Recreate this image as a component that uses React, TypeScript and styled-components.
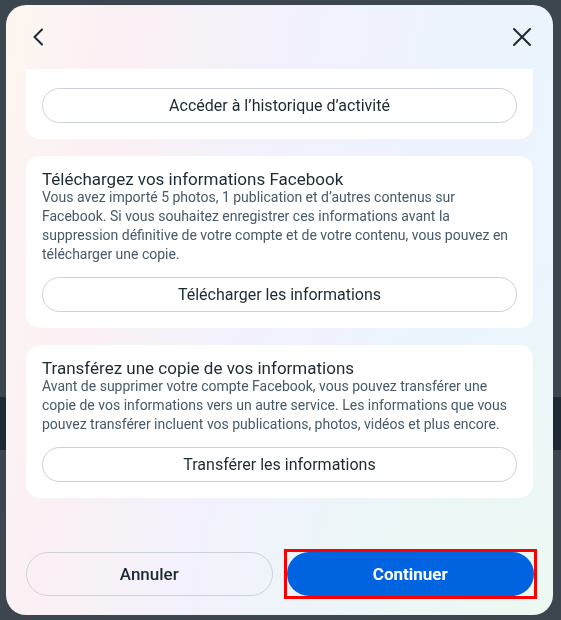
import React, { useLayoutEffect, useRef } from 'react';
import styled, { createGlobalStyle } from 'styled-components';

const GlobalStyle = createGlobalStyle`
  html, body {
    margin: 0;
    padding: 0;
    height: 100%;
  }
  body {
    font-family: Roboto, "Liberation Sans", Arial, sans-serif;
    background: #3c464e;
    overflow: hidden;
  }
`;

const Page = styled.div`
  height: 620px;
  padding-top: 397px;
  box-sizing: border-box;
`;

const PageBand = styled.div`
  height: 53px;
  background: #1f2b34;
`;

const Modal = styled.div`
  position: fixed;
  left: 6px;
  top: 5px;
  width: 547px;
  height: 610px;
  border-radius: 20px;
  overflow: hidden;
  display: flex;
  flex-direction: column;
  background:
    radial-gradient(circle at 100% 100%, #ecf9f2 0%, rgba(236, 249, 242, 0) 45%),
    linear-gradient(100deg, #fdf7f0 0%, #fbf0f4 18%, #f3f1fb 42%, #ecf3fd 70%, #ecf4fc 100%);
`;

const Header = styled.div`
  height: 64px;
  flex: none;
  display: flex;
  align-items: center;
  justify-content: space-between;
  padding: 0 16px 0 18px;
`;

const IconButton = styled.button`
  width: 30px;
  height: 30px;
  border: none;
  background: transparent;
  padding: 0;
  display: flex;
  align-items: center;
  justify-content: center;
  color: #1c2b33;
  cursor: pointer;
`;

const ScrollArea = styled.div`
  position: relative;
  flex: 1;
  overflow: hidden;
  padding: 0 20px 120px;
  display: flex;
  flex-direction: column;
  gap: 17px;
`;

const Card = styled.section`
  flex: none;
  background: #ffffff;
  border-radius: 14px;
  padding: 14px 16px 16px;
  display: flex;
  flex-direction: column;
`;

const CardTitle = styled.h3`
  margin: 0;
  font-size: 17px;
  line-height: 18px;
  font-weight: 400;
  color: #1c2b33;
`;

const CardText = styled.p<{ $spaced?: boolean }>`
  margin: 0 0 ${p => (p.$spaced ? '17px' : '13px')};
  font-size: 14px;
  line-height: 19px;
  color: #465a69;
`;

const OutlineButton = styled.button`
  height: 35px;
  width: 100%;
  border-radius: 18px;
  border: 1px solid #cbd2d9;
  background: #ffffff;
  font-family: inherit;
  font-size: 16px;
  color: #1c2b33;
  cursor: pointer;
`;

const Footer = styled.div`
  flex: none;
  display: grid;
  grid-template-columns: 1fr 1fr;
  gap: 14px;
  padding: 20px 20px 19px;
`;

const PillButton = styled.button<{ $primary?: boolean }>`
  height: 44px;
  width: 100%;
  border-radius: 22px;
  font-family: inherit;
  font-size: 17px;
  cursor: pointer;
  border: ${p => (p.$primary ? 'none' : '1px solid #cbd2d9')};
  background: ${p => (p.$primary ? '#0064e0' : 'transparent')};
  color: ${p => (p.$primary ? '#ffffff' : '#1c2b33')};
  font-weight: ${p => (p.$primary ? 700 : 500)};
`;

const Highlight = styled.div`
  margin: -3px -4px -3px -3px;
  border: 3px solid #ff0000;
  display: flex;
`;

const ChevronLeft = () => (
  <svg width="16" height="18" viewBox="0 0 16 18" fill="none">
    <path d="M11 1.5 L3.5 9 L11 16.5" stroke="currentColor" strokeWidth="2" strokeLinecap="round" strokeLinejoin="round" />
  </svg>
);

const CloseIcon = () => (
  <svg width="20" height="20" viewBox="0 0 20 20" fill="none">
    <path d="M2 2 L18 18 M18 2 L2 18" stroke="currentColor" strokeWidth="2" strokeLinecap="round" />
  </svg>
);

export default function App() {
  const scrollRef = useRef<HTMLDivElement>(null);
  const secondRef = useRef<HTMLElement>(null);

  // the dialog is shown scrolled down, with the first card half hidden
  useLayoutEffect(() => {
    if (scrollRef.current && secondRef.current) {
      scrollRef.current.scrollTop = secondRef.current.offsetTop - 87;
    }
  }, []);

  return (
    <>
      <GlobalStyle />
      <Page>
        <PageBand />
      </Page>
      <Modal>
        <Header>
          <IconButton aria-label="Retour">
            <ChevronLeft />
          </IconButton>
          <IconButton aria-label="Fermer">
            <CloseIcon />
          </IconButton>
        </Header>

        <ScrollArea ref={scrollRef}>
          <Card>
            <CardTitle>Consultez votre historique d’activité</CardTitle>
            <CardText $spaced>
              Vous pouvez consulter et gérer vos publications et votre activité
              <br />
              à tout moment depuis votre historique d’activité.
            </CardText>
            <OutlineButton>Accéder à l’historique d’activité</OutlineButton>
          </Card>

          <Card ref={secondRef}>
            <CardTitle>Téléchargez vos informations Facebook</CardTitle>
            <CardText>
              Vous avez importé 5 photos, 1 publication et d’autres contenus sur Facebook. Si vous souhaitez
              enregistrer ces informations avant la suppression définitive de votre compte et de votre contenu,
              vous pouvez en télécharger une copie.
            </CardText>
            <OutlineButton>Télécharger les informations</OutlineButton>
          </Card>

          <Card>
            <CardTitle>Transférez une copie de vos informations</CardTitle>
            <CardText>
              Avant de supprimer votre compte Facebook, vous pouvez transférer une copie de vos informations vers
              un autre service. Les informations que vous pouvez transférer incluent vos publications, photos,
              vidéos et plus encore.
            </CardText>
            <OutlineButton>Transférer les informations</OutlineButton>
          </Card>
        </ScrollArea>

        <Footer>
          <PillButton>Annuler</PillButton>
          <Highlight>
            <PillButton $primary>Continuer</PillButton>
          </Highlight>
        </Footer>
      </Modal>
    </>
  );
}
